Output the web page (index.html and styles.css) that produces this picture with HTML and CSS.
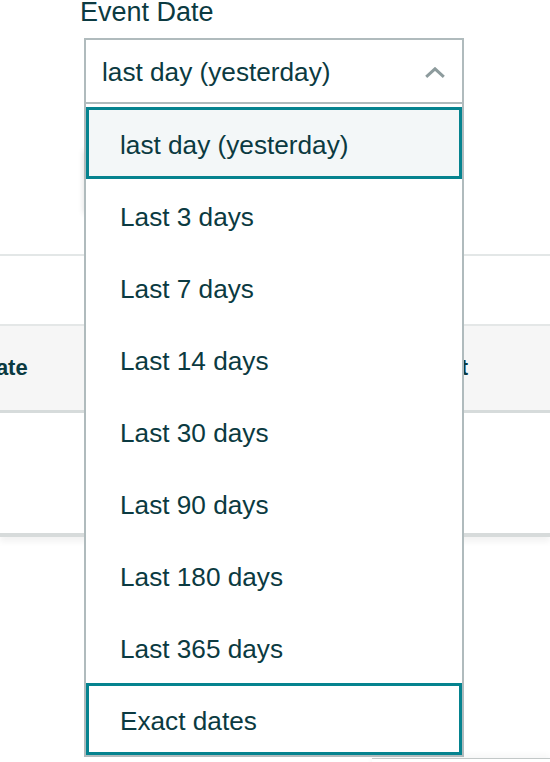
FILE: index.html
```html
<!DOCTYPE html>
<html lang="en">
<head>
<meta charset="utf-8">
<title>Event Date filter</title>
<link rel="stylesheet" href="styles.css">
</head>
<body>
<div class="page">
  <div class="filter">
    <div class="label">Event Date</div>
    <div class="select-wrap">
      <div class="select">
        <span class="select-value">last day (yesterday)</span>
        <svg class="chevron" width="20" height="11" viewBox="0 0 20 11" aria-hidden="true">
          <polyline points="1.2,9.8 10,1.8 18.8,9.8" fill="none" stroke="#8d9b9d" stroke-width="3"/>
        </svg>
      </div>
      <ul class="menu">
        <li class="option selected">last day (yesterday)</li>
        <li class="option">Last 3 days</li>
        <li class="option">Last 7 days</li>
        <li class="option">Last 14 days</li>
        <li class="option">Last 30 days</li>
        <li class="option">Last 90 days</li>
        <li class="option">Last 180 days</li>
        <li class="option">Last 365 days</li>
        <li class="option focused">Exact dates</li>
      </ul>
    </div>
    <div class="apply-btn"></div>
  </div>
  <div class="separator"></div>
  <div class="table">
    <div class="thead">
      <span class="th th-date">Date</span>
      <span class="th th-count">Count</span>
    </div>
    <div class="tbody"></div>
  </div>
  <div class="footer-row">
    <div class="footer-panel"></div>
  </div>
</div>
</body>
</html>
```

FILE: styles.css
```css
* {
  box-sizing: border-box;
}

html, body {
  margin: 0;
  padding: 0;
  background: #ffffff;
  overflow: hidden;
}

body {
  font-family: "Liberation Sans", Arial, sans-serif;
  color: #0b3a41;
  width: 550px;
  height: 762px;
}

.page {
  position: relative;
  width: 550px;
  height: 762px;
}

.filter {
  padding-left: 84px;
}

.label {
  font-size: 27px;
  line-height: 24px;
  height: 24px;
  margin-left: -4px;
  margin-bottom: 14px;
}

.select-wrap {
  position: relative;
  width: 380px;
  z-index: 10;
}

.select {
  height: 66px;
  border: 2px solid #b0bbbd;
  background: #ffffff;
  display: flex;
  align-items: center;
  justify-content: space-between;
  padding: 2px 17px 0 16px;
}

.select-value {
  font-size: 26.2px;
}

.chevron {
  display: block;
}

.menu {
  position: absolute;
  top: 100%;
  left: 0;
  width: 380px;
  margin: 0;
  padding: 3px 0 0 0;
  list-style: none;
  background: #ffffff;
  border: 2px solid #b0bbbd;
  border-top: 0;
}

.option {
  height: 72px;
  display: flex;
  align-items: center;
  padding: 4px 0 0 31px;
  font-size: 26.2px;
  border: 3px solid transparent;
}

.option.selected {
  border-color: #05838f;
  background: #f3f7f8;
}

.option.focused {
  border-color: #05838f;
}

.apply-btn {
  margin-top: 46px;
  width: 220px;
  height: 64px;
  background: #ffffff;
  box-shadow: 0 0 6px rgba(0, 0, 0, 0.14);
  border-radius: 3px;
}

.separator {
  margin-top: 40px;
  height: 2px;
  background: #e3e7e7;
}

.table {
  margin-top: 68px;
  border-bottom: 4px solid #d7dbdb;
  box-shadow: 0 5px 6px rgba(0, 0, 0, 0.05);
}

.thead {
  display: flex;
  align-items: center;
  height: 89px;
  background: #f6f6f6;
  border-top: 2px solid #e4e7e7;
  border-bottom: 3px solid #d6dbdb;
}

.th {
  font-size: 22px;
  font-weight: bold;
}

.th-date {
  margin-left: -20px;
}

.th-count {
  margin-left: auto;
  margin-right: 82px;
}

.tbody {
  height: 120px;
}

.footer-row {
  display: flex;
  justify-content: flex-end;
  margin-top: 221px;
}

.footer-panel {
  width: 178px;
  height: 20px;
  border-top: 1px solid #c3c8c8;
  box-shadow: 0 -3px 6px rgba(0, 0, 0, 0.04);
}
```
